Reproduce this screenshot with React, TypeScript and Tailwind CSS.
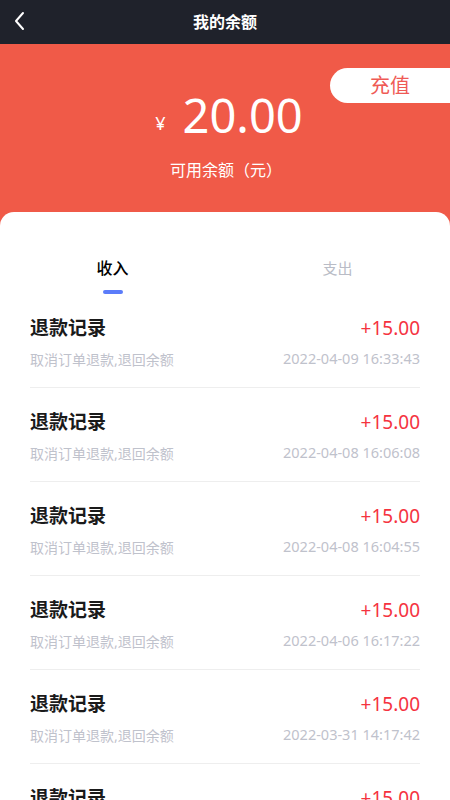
import React from "react";

const rows = [
  "2022-04-09 16:33:43",
  "2022-04-08 16:06:08",
  "2022-04-08 16:04:55",
  "2022-04-06 16:17:22",
  "2022-03-31 14:17:42",
  "2022-03-30 10:12:30",
];

export default function App() {
  const font = { fontFamily: '"Noto Sans", "Noto Sans CJK SC", sans-serif' };
  return (
    <div className="w-[450px] h-[800px] overflow-hidden bg-[#f05a48]" style={font}>
      <div className="h-[44px] bg-[#1f222b] flex items-center relative">
        <svg className="absolute left-[12px] top-[11px]" width="16" height="20" viewBox="0 0 16 20">
          <path d="M11 2 L4 10 L11 18" fill="none" stroke="#fff" strokeWidth="2" strokeLinecap="round" strokeLinejoin="round" />
        </svg>
        <div className="flex-1 text-center text-white font-bold text-[16px] leading-[44px]">我的余额</div>
      </div>
      <div className="h-[168px] relative flex flex-col items-center">
        <div className="absolute right-0 top-[24px] w-[120px] h-[35px] bg-white rounded-l-full flex items-center pl-[40px] text-[20px] text-[#ef5a55]">
          充值
        </div>
        <div className="flex items-end mt-[44px] pl-[8px] text-white">
          <span className="text-[18px] leading-[20px] mb-[9px] mr-[17px]">¥</span>
          <span className="text-[47px] leading-[54px] font-normal">20.00</span>
        </div>
        <div className="mt-[17px] text-white text-[16px] leading-[22px] pl-[2px]">可用余额（元）</div>
      </div>
      <div className="bg-white rounded-t-[14px] h-[600px] pt-[45px]">
        <div className="flex">
          <div className="flex-1 flex flex-col items-center">
            <div className="text-[16px] leading-[22px] text-black font-medium">收入</div>
            <div className="mt-[11px] w-[20px] h-[4px] rounded-full bg-[#5b7cfa]"></div>
          </div>
          <div className="flex-1 flex flex-col items-center">
            <div className="text-[15px] leading-[22px] text-[#b9bcc6]">支出</div>
          </div>
        </div>
        <div className="px-[30px]">
          {rows.map((d, i) => (
            <div key={i} className="pt-[21px] pb-[18px] border-b border-[#eeeeee]">
              <div className="flex justify-between items-center h-[26px]">
                <span className="text-[19px] font-bold text-[#1a1a1a]">退款记录</span>
                <span className="text-[19px] text-[#f5333f]">+15.00</span>
              </div>
              <div className="mt-[8px] flex justify-between items-center h-[20px] text-[14px] text-[#bfc2cc]">
                <span>取消订单退款,退回余额</span>
                <span className="text-[14.5px]">{d}</span>
              </div>
            </div>
          ))}
        </div>
      </div>
    </div>
  );
}
